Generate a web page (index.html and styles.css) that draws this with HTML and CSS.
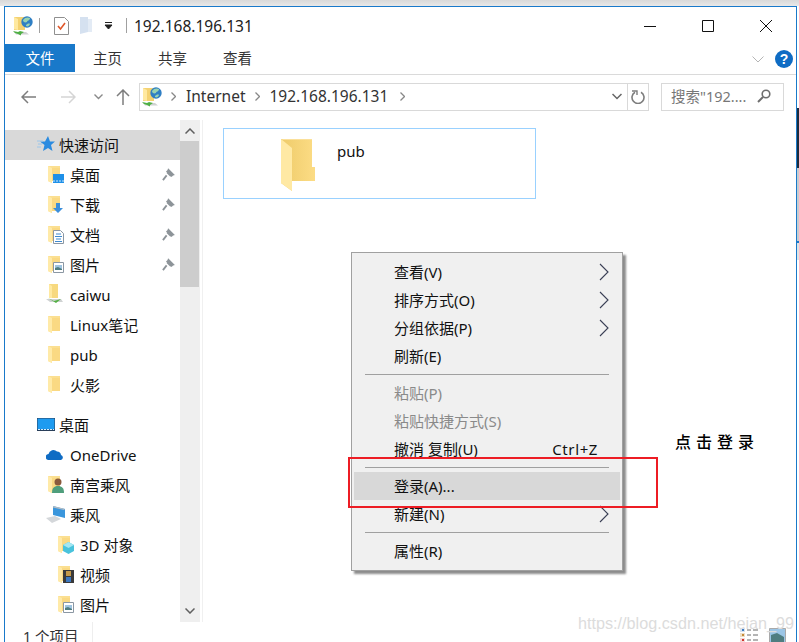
FILE: index.html
```html
<!DOCTYPE html>
<html lang="zh">
<head>
<meta charset="utf-8">
<title>192.168.196.131</title>
<link rel="stylesheet" href="styles.css">
</head>
<body>
<svg class="defs" width="0" height="0" aria-hidden="true">
  <defs>
    <linearGradient id="back" x1="0" x2="1" y1="0" y2="0">
      <stop offset="0" stop-color="#eecb6a"/>
      <stop offset="1" stop-color="#fcdc85"/>
    </linearGradient>
    <symbol id="folder" viewBox="0 0 13 17">
      <path d="M0 0h12v15H4v2l-4-2z" fill="#fbdf90"/>
      <path d="M0 0l4 2v15l-4-2z" fill="#ffeaa8"/>
      <path d="M4 2h8v13H4z" fill="#fad983"/>
    </symbol>
    <symbol id="netfolder" viewBox="0 0 20 20">
      <path d="M1 1h11v13H1z" fill="#f4d272"/>
      <path d="M1 1l4 2v11l-4-1z" fill="#ffe9a0"/>
      <circle cx="14" cy="6" r="5.700" fill="#2f7fc4"/>
      <path d="M10 4c2-3 5-3 7-2 0 3-3 2-3 4-2 1-4 0-4-2z" fill="#9ad3b0"/>
      <path d="M13 9c1-1 3-2 4-1-1 2-2 3-4 2z" fill="#9ad3b0"/>
      <path d="M1 16h12l3 2.500H3z" fill="#cfd2d2"/>
      <path d="M0 15l5 1 2-1 4 1-3 2v1.500L5 18l-3-1z" fill="#4fb045"/>
    </symbol>
    <symbol id="pin" viewBox="0 0 14 14">
      <path d="M1 13l4-5M5 3l6 6M7 2l5 5-3 1-3-3z" stroke="#8d9499" stroke-width="2" fill="#8d9499"/>
    </symbol>
    <symbol id="next" viewBox="0 0 10 18">
      <path d="M1 1l8 8-8 8" fill="none" stroke="#3a3f55" stroke-width="1.100"/>
    </symbol>
    <symbol id="picbadge" viewBox="0 0 11 11">
      <path d="M.5.500h10v10H.5z" fill="#fff" stroke="#8b97a3"/>
      <path d="M2 3h7v5H2z" fill="#9fc4e0"/>
      <path d="M2 6l3-1 4 2v1H2z" fill="#4f7d80"/>
    </symbol>
  </defs>
</svg>

<div class="window">
  <header class="titlebar">
    <svg class="ico-title" width="20" height="20"><use href="#netfolder"/></svg>
    <span class="tsep"></span>
    <svg class="ico-qa" width="15" height="18" viewBox="0 0 15 18"><path d="M.5.500h10l4 4v13H.5z" fill="#fff" stroke="#8f8f8f"/><path d="M4 9l2.500 3L11 6" fill="none" stroke="#e0572a" stroke-width="1.600"/></svg>
    <svg class="ico-qb" width="13" height="17" viewBox="0 0 13 17"><path d="M0 0h8v15l-8 2z" fill="#d5e1f0"/><path d="M8 2h4v13H8z" fill="#e3ebf5"/></svg>
    <svg class="ico-qc" width="9" height="7" viewBox="0 0 9 7"><path d="M1 .5h7M1 3h7L4.500 7z" stroke="#222" fill="#222"/></svg>
    <span class="tsep sep-b"></span>
    <span class="wintitle">192.168.196.131</span>
    <div class="winctl">
      <svg width="12" height="12" viewBox="0 0 12 12"><path d="M0 6.500h12" stroke="#111"/></svg>
      <svg width="12" height="12" viewBox="0 0 12 12"><path d="M.5.500h11v11H.5z" fill="none" stroke="#111"/></svg>
      <svg width="12" height="12" viewBox="0 0 12 12"><path d="M0 0l12 12M12 0L0 12" stroke="#111"/></svg>
    </div>
  </header>

  <nav class="ribbon">
    <span class="tab tab-file">文件</span>
    <span class="tab">主页</span>
    <span class="tab">共享</span>
    <span class="tab">查看</span>
    <span class="ribbon-right">
      <svg width="12" height="7" viewBox="0 0 12 7"><path d="M.5.500L6 6l5.500-5.500" fill="none" stroke="#b5b5b5"/></svg>
      <span class="help">?</span>
    </span>
  </nav>

  <div class="addressrow">
    <svg class="nav-ico back" width="16" height="14" viewBox="0 0 16 14"><path d="M15 7H1M7 1L1 7l6 6" fill="none" stroke="#7d7d7d" stroke-width="1.500"/></svg>
    <svg class="nav-ico fwd" width="16" height="14" viewBox="0 0 16 14"><path d="M1 7h14M9 1l6 6-6 6" fill="none" stroke="#d5d5d5" stroke-width="1.500"/></svg>
    <svg class="nav-ico down" width="9" height="6" viewBox="0 0 9 6"><path d="M.5.500l4 4 4-4" fill="none" stroke="#8a8a8a" stroke-width="1.400"/></svg>
    <svg class="nav-ico up" width="14" height="16" viewBox="0 0 14 16"><path d="M7 16V1M1 7l6-6 6 6" fill="none" stroke="#7d7d7d" stroke-width="1.500"/></svg>
    <div class="addressbox">
      <svg class="addr-ico" width="20" height="20"><use href="#netfolder"/></svg>
      <svg class="crumb-sep" width="5" height="9" viewBox="0 0 5 9"><path d="M.5.500l4 4-4 4" fill="none" stroke="#888" stroke-width="1.300"/></svg>
      <span class="crumb">Internet</span>
      <svg class="crumb-sep" width="5" height="9" viewBox="0 0 5 9"><path d="M.5.500l4 4-4 4" fill="none" stroke="#888" stroke-width="1.300"/></svg>
      <span class="crumb">192.168.196.131</span>
      <svg class="crumb-sep crumb-last" width="5" height="9" viewBox="0 0 5 9"><path d="M.5.500l4 4-4 4" fill="none" stroke="#888" stroke-width="1.300"/></svg>
      <svg class="addr-drop" width="10" height="7" viewBox="0 0 10 7"><path d="M.5 1L5 5.500 9.500 1" fill="none" stroke="#666" stroke-width="1.500"/></svg>
      <span class="refresh">
        <svg width="14" height="14" viewBox="0 0 14 14"><path d="M4 2.300A6 6 0 1 0 10 2.300" fill="none" stroke="#7d7d7d" stroke-width="1.600"/><path d="M1 1h5v4" fill="none" stroke="#7d7d7d" stroke-width="1.400"/></svg>
      </span>
    </div>
    <div class="searchbox">
      <span>搜索"192....</span>
      <svg width="14" height="14" viewBox="0 0 14 14"><circle cx="9" cy="5" r="3.800" fill="none" stroke="#6e6e6e" stroke-width="1.600"/><path d="M6 8l-5 5" stroke="#6e6e6e" stroke-width="2"/></svg>
    </div>
  </div>

  <main class="main">
    <aside class="sidebar">
      <ul class="tree">
        <li class="row root selected">
          <svg class="ico" width="18" height="16" viewBox="0 0 18 16"><path d="M11 0l2 5.500h5l-4 3.500 1.500 6L11 12l-5 3 1.500-6L3 5.500h5z" fill="#2b8be0"/><path d="M0 5h6M1 8h4M0 11h4" stroke="#9cc6ea"/></svg>
          <span>快速访问</span>
        </li>
        <li class="row pinned">
          <span class="stack"><svg width="13" height="17"><use href="#folder"/></svg><svg class="badge" width="11" height="9" viewBox="0 0 11 9"><path d="M0 0h11v9H0z" fill="#1e90e8"/><path d="M0 7h11" stroke="#cfe8fb" stroke-dasharray="2 1"/></svg></span>
          <span class="label">桌面</span>
          <svg class="pin" width="13" height="13"><use href="#pin"/></svg>
        </li>
        <li class="row pinned">
          <span class="stack"><svg width="13" height="17"><use href="#folder"/></svg><svg class="badge" width="10" height="10" viewBox="0 0 10 10"><path d="M3 0h4v5h3l-5 5-5-5h3z" fill="#3b8fdc"/></svg></span>
          <span class="label">下载</span>
          <svg class="pin" width="13" height="13"><use href="#pin"/></svg>
        </li>
        <li class="row pinned">
          <span class="stack"><svg width="13" height="17"><use href="#folder"/></svg><svg class="badge badge-tall" width="11" height="14" viewBox="0 0 11 14"><path d="M.5.500h7l3 3v10H.5z" fill="#fff" stroke="#8b97a3"/><path d="M3 4h5M2 6.500h7M3 9h5M2 11.500h7" stroke="#3d8ad0"/></svg></span>
          <span class="label">文档</span>
          <svg class="pin" width="13" height="13"><use href="#pin"/></svg>
        </li>
        <li class="row pinned">
          <span class="stack"><svg width="13" height="17"><use href="#folder"/></svg><svg class="badge" width="11" height="11"><use href="#picbadge"/></svg></span>
          <span class="label">图片</span>
          <svg class="pin" width="13" height="13"><use href="#pin"/></svg>
        </li>
        <li class="row">
          <span class="stack"><svg class="netdrive" width="17" height="20" viewBox="0 0 17 20"><path d="M3 0h9v14H3z" fill="#f7d97f"/><path d="M3 0l3 2v12H3z" fill="#ffe9a0"/><path d="M0 15h15l2 3H4z" fill="#cfd2d2"/><path d="M2 14l6 3 7-2-5 4z" fill="#52b043"/></svg></span>
          <span class="label latin">caiwu</span>
        </li>
        <li class="row">
          <span class="stack"><svg width="13" height="17"><use href="#folder"/></svg></span>
          <span class="label">Linux笔记</span>
        </li>
        <li class="row">
          <span class="stack"><svg width="13" height="17"><use href="#folder"/></svg></span>
          <span class="label latin">pub</span>
        </li>
        <li class="row">
          <span class="stack"><svg width="13" height="17"><use href="#folder"/></svg></span>
          <span class="label">火影</span>
        </li>
        <li class="row root spaced">
          <svg class="ico" width="18" height="13" viewBox="0 0 18 13"><path d="M0 0h18v13H0z" fill="#2a3f5a"/><path d="M.5.500h17v11H.5z" fill="#1e9bf0"/><path d="M1 11.500h16" stroke="#d8eefc" stroke-dasharray="2 1"/></svg>
          <span>桌面</span>
        </li>
        <li class="row">
          <span class="stack"><svg class="cloud" width="18" height="12" viewBox="0 0 18 12"><path d="M3 12a3 3 0 0 1-.5-6A5 5 0 0 1 11 3.500 4 4 0 0 1 15 7a2.600 2.600 0 0 1 0 5z" fill="#0f6cc4"/></svg></span>
          <span class="label latin">OneDrive</span>
        </li>
        <li class="row">
          <span class="stack"><svg width="13" height="17"><use href="#folder"/></svg><svg class="badge badge-user" width="12" height="15" viewBox="0 0 12 15"><circle cx="6" cy="4" r="3.500" fill="#8a5a3c"/><path d="M0 15c0-5 2-7 6-7s6 2 6 7z" fill="#4f9e7c"/></svg></span>
          <span class="label">南宫乘风</span>
        </li>
        <li class="row">
          <span class="stack"><svg class="pc" width="19" height="17" viewBox="0 0 19 17"><path d="M7 0l12 3v9L7 9z" fill="#3a96dc"/><path d="M7 0l12 3-1 1L7 1.500z" fill="#b5bcc2"/><path d="M0 12l9-2 6 3-9 4z" fill="#d4d7da"/></svg></span>
          <span class="label">乘风</span>
        </li>
        <li class="row sub">
          <span class="stack"><svg width="13" height="17"><use href="#folder"/></svg><svg class="badge badge-cube" width="11" height="12" viewBox="0 0 11 12"><path d="M5.500 0L11 3v6l-5.500 3L0 9V3z" fill="#49c3dc"/><path d="M0 3l5.500 3L11 3 5.500 0z" fill="#a3e6f2"/></svg></span>
          <span class="label">3D 对象</span>
        </li>
        <li class="row sub">
          <span class="stack"><svg width="13" height="17"><use href="#folder"/></svg><svg class="badge badge-film" width="11" height="13" viewBox="0 0 11 13"><path d="M0 0h11v13H0z" fill="#3a3a3a"/><path d="M3 1h5v5H3z" fill="#c59a4a"/><path d="M3 7h5v5H3z" fill="#3c78c0"/></svg></span>
          <span class="label">视频</span>
        </li>
        <li class="row sub">
          <span class="stack"><svg width="13" height="17"><use href="#folder"/></svg><svg class="badge" width="11" height="11"><use href="#picbadge"/></svg></span>
          <span class="label">图片</span>
        </li>
      </ul>
      <div class="scrollbar">
        <svg class="arrow" width="10" height="6" viewBox="0 0 10 6"><path d="M.5 5.500L5 1l4.500 4.500" fill="none" stroke="#606060" stroke-width="1.500"/></svg>
        <div class="thumb"></div>
        <svg class="arrow arrow-end" width="10" height="6" viewBox="0 0 10 6"><path d="M.5.500L5 5 9.500.5" fill="none" stroke="#606060" stroke-width="1.500"/></svg>
      </div>
    </aside>
    <section class="content">
      <div class="tile">
        <svg class="tile-ico" width="34" height="52" viewBox="0 0 34 52"><path d="M0 0H31V28H34V42H11V52L0 44Z" fill="url(#back)"/><path d="M0 0L11 9V52L0 44Z" fill="#ffe9a4"/><path d="M0 0H31L31 1H2z" fill="#fbe09a"/></svg>
        <span class="tile-name">pub</span>
      </div>
    </section>
  </main>

  <footer class="status">
    <span class="count">1 个项目</span>
    <span class="status-sep"></span>
    <span class="views">
      <svg width="18" height="14" viewBox="0 0 18 14"><path d="M0 0h5v4H0z" fill="#d7e2ee"/><path d="M2 1h2v2H2z" fill="#3d7dc4"/><path d="M0 5h5v4H0z" fill="#eee0c8"/><path d="M2 6h2v2H2z" fill="#c58a3a"/><path d="M0 10h5v4H0z" fill="#f4d8d8"/><path d="M2 11h2v2H2z" fill="#d0342c"/><path d="M7 2h4M13 2h5M7 7h4M13 7h5M7 12h4M13 12h5" stroke="#6a6a6a"/></svg>
      <svg width="17" height="14" viewBox="0 0 17 14"><path d="M.5.500h16v14H.5z" fill="#9cc6e6" stroke="#a9a9a9"/><path d="M2 7l6-2 7 4v5H2z" fill="#4f7d80"/></svg>
    </span>
  </footer>
</div>

<div class="menu">
  <div class="mi"><span>查看(V)</span><svg class="chev" width="10" height="18"><use href="#next"/></svg></div>
  <div class="mi"><span>排序方式(O)</span><svg class="chev" width="10" height="18"><use href="#next"/></svg></div>
  <div class="mi"><span>分组依据(P)</span><svg class="chev" width="10" height="18"><use href="#next"/></svg></div>
  <div class="mi"><span>刷新(E)</span></div>
  <hr class="msep">
  <div class="mi off"><span>粘贴(P)</span></div>
  <div class="mi off"><span>粘贴快捷方式(S)</span></div>
  <div class="mi"><span>撤消 复制(U)</span><span class="short">Ctrl+Z</span></div>
  <hr class="msep">
  <div class="mi hot"><span>登录(A)...</span></div>
  <div class="mi"><span>新建(N)</span><svg class="chev" width="10" height="18"><use href="#next"/></svg></div>
  <hr class="msep">
  <div class="mi"><span>属性(R)</span></div>
</div>
<div class="redbox"></div>
<div class="note">点击登录</div>
<div class="watermark">https://blog.csdn.net/heian_99</div>
<div class="edge"></div>
</body>
</html>
```
FILE: styles.css
```css
* { box-sizing: border-box; }
html, body { margin: 0; height: 100%; overflow: hidden; }
body {
  position: relative;
  color: #111;
  font: 15px "Noto Sans", "Noto Sans CJK SC", sans-serif;
  padding: 6px 2px 0 4px;
  background: linear-gradient(#d9d9d9, #e8e8e8 6px, #fff 6px);
}
.defs { position: absolute; }
.window {
  height: 636px;
  background: #fff;
  border: 1px solid #1979ca;
  border-bottom: 0;
  display: flex;
  flex-direction: column;
}
.titlebar {
  height: 37px;
  flex: none;
  display: flex;
  align-items: center;
  padding-left: 8px;
}
.tsep { width: 1px; height: 15px; background: #a0a0a0; margin-left: 6px; }
.ico-qa { margin-left: 14px; }
.ico-qb { margin-left: 11px; }
.ico-qc { margin-left: 11px; }
.sep-b { margin-left: 13px; }
.wintitle { margin-left: 7px; color: #222; font-size: 15.500px; }
.winctl { margin-left: auto; display: flex; gap: 46px; padding-right: 24px; align-items: center; }
.ribbon {
  height: 31px;
  flex: none;
  display: flex;
  align-items: flex-start;
  border-bottom: 1px solid #dadada;
}
.tab { width: 65px; height: 28px; line-height: 29px; text-align: center; font-size: 14.500px; color: #333; }
.tab-file { width: 70px; background: #1979ca; color: #fff; }
.ribbon-right { margin-left: auto; display: flex; align-items: center; gap: 11px; padding: 2px 3px 0 0; height: 28px; }
.help {
  width: 18px; height: 18px; border-radius: 50%;
  background: #0f6cc4; color: #fff;
  font: bold 14px/18px "Liberation Sans", sans-serif;
  text-align: center;
}
.addressrow {
  height: 45px;
  flex: none;
  display: flex;
  align-items: center;
  padding: 0 12px 2px 0;
}
.nav-ico { flex: none; }
.back { margin-left: 16px; }
.fwd { margin-left: 23px; }
.down { margin-left: 18px; }
.up { margin-left: 13px; }
.addressbox {
  margin-left: 9px;
  width: 510px;
  height: 28px;
  border: 1px solid #d9d9d9;
  display: flex;
  align-items: center;
  font-size: 15.500px;
  color: #333;
  flex: none;
}
.crumb { line-height: 24px; padding-bottom: 2px; }
.addr-ico { margin-left: 2px; }
.crumb-sep { margin: 0 10px 0 9px; flex: none; }
.crumb-last { margin-left: 12px; }
.addr-drop { margin-left: auto; margin-right: 5px; }
.refresh { width: 21px; height: 100%; border-left: 1px solid #d9d9d9; display: flex; align-items: center; justify-content: center; }
.searchbox {
  margin-left: 12px;
  flex: 1;
  height: 28px;
  border: 1px solid #d9d9d9;
  display: flex;
  align-items: center;
  justify-content: space-between;
  padding: 0 12px 2px 9px;
  color: #777;
  font-size: 14.500px;
}
.main { flex: 1; display: flex; min-height: 0; }
.sidebar { width: 195px; flex: none; display: flex; }
.tree { list-style: none; margin: 0; padding: 10px 0 0; width: 175px; flex: none; }
.row { height: 30px; display: flex; align-items: center; padding: 0 0 2px 43px; color: #111; }
.row.root { padding-left: 32px; }
.row.root .ico { margin-right: 4px; flex: none; }
.row.sub { padding-left: 53px; }
.row.spaced { margin-top: 10px; }
.selected { background: #d9d9d9; }
.stack { width: 22px; height: 20px; flex: none; position: relative; display: flex; align-items: center; }
.badge { position: absolute; left: 5px; bottom: 1px; }
.badge-tall { bottom: 0; }
.badge-user { bottom: 1px; left: 4px; }
.badge-cube { left: 5px; bottom: 0; }
.badge-film { bottom: 1px; }
.netdrive, .cloud, .pc { margin-left: -2px; }
.label { flex: 1; white-space: nowrap; }
.latin { padding-top: 2px; }
.pin { margin-right: 5px; flex: none; }
.scrollbar {
  width: 20px; flex: none;
  background: #efefef;
  display: flex; flex-direction: column; align-items: center;
}
.arrow { margin: 8px 0 7px; flex: none; }
.thumb { width: 19px; height: 146px; background: #cdcdcd; flex: none; align-self: flex-start; }
.arrow-end { margin: auto 0 8px; }
.content { flex: 1; padding: 8px 0 0 20px; border-left: 1px solid #f0f0f0; margin-left: 2px; }
.tile {
  width: 313px; height: 71px;
  border: 1px solid #99d1ff;
  display: flex;
  align-items: flex-start;
  padding: 10px 0 0 57px;
}
.tile-name { margin-left: 22px; line-height: 24px; }
.status {
  height: 20px;
  flex: none;
  display: flex;
  align-items: flex-start;
  padding-left: 18px;
  font-size: 14.500px;
  color: #333;
  overflow: hidden;
}
.count { line-height: 29px; width: 69px; }
.status-sep { width: 1px; height: 20px; background: #eee; }
.views { margin-left: auto; padding: 6px 10px 0 0; display: flex; gap: 11px; }
.menu {
  position: absolute;
  left: 351px; top: 252px;
  width: 272px; height: 319px;
  background: #f0f0f0;
  border: 1px solid #a0a0a0;
  box-shadow: 3px 3px 2px rgba(0,0,0,.45);
  padding: 5px 2px;
}
.mi {
  height: 28px;
  display: flex;
  align-items: center;
  justify-content: space-between;
  padding: 0 11px 0 40px;
  line-height: 26px;
}
.off { color: #8a8a8a; }
.hot { background: #d8d8d8; }
.msep { height: 1px; border: 0; background: #a0a0a0; margin: 4px 11px; }
.short { margin-right: 11px; letter-spacing: .6px; }
.redbox {
  position: absolute;
  left: 348px; top: 457px;
  width: 310px; height: 51px;
  border: 2px solid #ed1c24;
}
.note {
  position: absolute;
  left: 675px; top: 430px;
  font: 500 16px/22px "Noto Sans CJK SC", serif;
  letter-spacing: 5px;
  color: #000;
}
.watermark {
  position: absolute;
  left: 578px; top: 613px;
  font: 16.200px/20px "Liberation Sans", sans-serif;
  color: #dcdcdc;
  white-space: nowrap;
}
.edge {
  position: absolute;
  right: 0; top: 100px;
  width: 2px; height: 160px;
  background: linear-gradient(#fff 8px, #1c2b3c 8px, #1c2b3c 68px, #c8ccd0 68px, #c8ccd0 141px, #1979ca 141px, #1979ca 143px, #dfe2e4 143px);
}
```
